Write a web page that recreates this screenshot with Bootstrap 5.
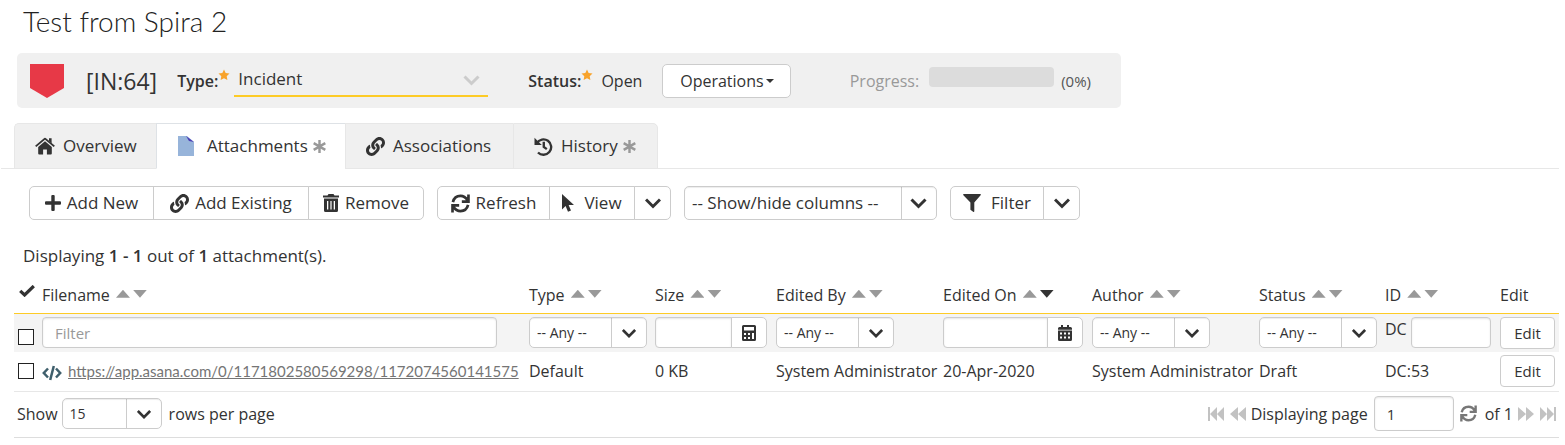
<!DOCTYPE html>
<html lang="en">
<head>
<meta charset="utf-8">
<meta name="viewport" content="width=device-width, initial-scale=1">
<title>Test from Spira 2 - Attachments</title>
<link href="https://cdn.jsdelivr.net/npm/bootstrap@5.3.0/dist/css/bootstrap.min.css" rel="stylesheet">
<style>
  body { font-family: "Open Sans", "Noto Sans", sans-serif; font-size: 16px; line-height: 24px; color: #333; background: #fff; }
  svg { fill: currentColor; flex: none; }
  .line-icon { fill: none; stroke: currentColor; }
  .page-title { font: 300 28px/32px Lato, sans-serif; margin: 5px 23px 16px; color: #222; }
  .art-bar { width: min(1104px, calc(100% - 34px)); height: 55px; margin-left: 17px; padding: 0 30px 0 13px; background: #f0f0f0; border-radius: 5px; white-space: nowrap; }
  .art-id { font-size: 23px; margin: 0 20px 0 22px; }
  .fld { font-weight: 600; }
  .star { width: 12px; height: 12px; color: #f8a32b; margin-top: -12px; }
  .type-select { width: 254px; height: 32px; margin: 0 40px 0 4px; padding: 0 24px 2px 4px; border: 0; border-bottom: 2px solid #fdcb26; border-radius: 0; color: #333; font-size: 17px; line-height: 24px;
    background: transparent url("data:image/svg+xml,%3Csvg xmlns='http://www.w3.org/2000/svg' viewBox='0 0 16 16'%3E%3Cpath fill='none' stroke='%23ccc' stroke-width='3' d='m1 4.500 7 7 7-7'/%3E%3C/svg%3E") no-repeat right 8px center / 17px 16px; }
  .btn-tool { --bs-btn-color: #333; --bs-btn-bg: #fff; --bs-btn-border-color: #ccc; --bs-btn-hover-color: #333; --bs-btn-hover-bg: #eee; --bs-btn-hover-border-color: #aaa;
    --bs-btn-font-size: 17px; --bs-btn-padding-x: 14px; --bs-btn-padding-y: 0; --bs-btn-border-radius: 5px; height: 34px; line-height: 24px; display: inline-flex; align-items: center; justify-content: center; gap: 6px; white-space: nowrap; }
  .btn-arrow { --bs-btn-padding-x: 9px; }
  .ops { --bs-btn-font-size: 16px; width: 129px; margin-left: 20px; gap: 0; }
  .ops::after { margin-left: 2px; }
  .art-note { font-size: 15px; color: #555; }
  .prog { width: 125px; height: 20px; border-radius: 4px; background: #dcdcdc; margin: 0 7px 8px 10px; }
  .soft { color: #999; }
  .tab-row { margin: 15px 6px 0 1px; padding-left: 13px; border-bottom: 1px solid #e7e7e7; flex-wrap: nowrap; }
  .tab-row .nav-link { height: 46px; padding: 0 20px; margin: 0 0 -1px; display: flex; align-items: center; color: #333; font-size: 17px; background: #f0f0f0; border: 1px solid #e7e7e7; border-right-width: 0; border-radius: 0; white-space: nowrap; }
  .tab-row li:first-child .nav-link { border-top-left-radius: 5px; }
  .tab-row li:last-child .nav-link { border-top-right-radius: 5px; border-right-width: 1px; }
  .tab-row .nav-link.active { background: #fff; border-bottom-color: #fff; color: #333; }
  .tab-ov { width: 142px; } .tab-at { width: 189px; } .tab-as { width: 168px; } .tab-hi { width: 145px; }
  .tools { margin: 17px 29px 0; gap: 13px; }
  .w-new { width: 125px; } .w-ex { width: 156px; } .w-rem { width: 116px; } .w-ref { width: 113px; } .w-view { width: 86px; } .w-arr { width: 37px; } .w-fil { width: 94px; }
  .cols-select, .mini-select { appearance: none; border: 1px solid #ccc; border-radius: 5px; color: #333; padding: 0 0 0 7px; background-color: #fff;
    background-image: url("data:image/svg+xml,%3Csvg xmlns='http://www.w3.org/2000/svg' viewBox='0 0 16 16'%3E%3Cpath fill='none' stroke='%23333' stroke-width='3' d='m1 4.500 7 7 7-7'/%3E%3C/svg%3E"), linear-gradient(#ccc, #ccc);
    background-repeat: no-repeat; background-position: right 10px center, right 34px top; background-size: 14px 14px, 1px 100%; box-shadow: inset 0 1px 1px #00000013; }
  .cols-select { width: 253px; height: 34px; font-size: 17px; background-size: 17px 16px, 1px 100%; background-position: right 9px center, right 34px top; }
  .mini-select { width: 118px; height: 31px; font-size: 14px; }
  .rows-select { width: 100px; margin: 0 7px 0 4px; }
  .count-line { margin: 24px 23px 9px; font-size: 17px; }
  .grid-wrap { margin: 0 6px 0 14px; }
  .grid-table { table-layout: fixed; width: 100%; min-width: 1400px; margin: 0; --bs-table-bg: transparent; --bs-table-color: #333; color: #333; }
  .grid-table > :not(caption) > * > * { padding: 0 0 0 5px; border-bottom: 0; vertical-align: middle; white-space: nowrap; }
  .grid-table thead th { font-weight: 400; height: 36px; }
  .c-chk { width: 23px; } .c-type { width: 126px; } .c-size { width: 121px; } .c-by { width: 167px; } .c-on { width: 149px; } .c-au { width: 167px; } .c-st { width: 126px; } .c-id { width: 115px; } .c-ed { width: 64px; }
  .grid-table .head-row > th { border-bottom: 1px solid #fdcb26; }
  .filter-row { background: #f4f4f4; height: 39px; }
  .data-row { height: 39px; }
  .grid-table .data-row > td { border-bottom: 1px solid #e7e7e7; }
  .foot-row { height: 46px; }
  .grid-table .foot-row > td { border-bottom: 1px solid #ddd; padding: 0 2px 1px 3px; }
  .sort { display: inline-flex; gap: 3px; vertical-align: 3px; margin-left: 2px; }
  .sort button { border: 0; padding: 0; width: 14px; height: 8px; background: #999; clip-path: polygon(0 0, 100% 0, 50% 100%); }
  .sort .up { clip-path: polygon(50% 0, 100% 100%, 0 100%); }
  .sort .on { background: #333; }
  .box { appearance: none; display: block; width: 16px; height: 16px; border: 1px solid #222; background: #fff; margin: 0 0 0 -1px; }
  .box:checked { background: #333; }
  .filter-row .box { margin-top: 9px; }
  .inp { height: 31px; padding: 0 12px; border: 1px solid #ccc; border-radius: 4px; font-size: 15px; color: #333; box-shadow: inset 0 1px 2px #0000001a; }
  .inp::placeholder { color: #999; }
  .name-inp { width: calc(100% - 27px); }
  .size-grp { width: 112px; } .date-grp { width: 140px; }
  .add-btn { --bs-btn-padding-x: 0; width: 36px; height: 31px; }
  .id-inp { width: 80px; margin-left: 4px; }
  .page-inp { width: 80px; height: 35px; margin: 0 6px; }
  .btn-edit { --bs-btn-font-size: 15px; --bs-btn-padding-x: 0; --bs-btn-border-radius: 4px; width: 55px; height: 32px; }
  .file-link { color: #757575; font: 15px/24px Lato, sans-serif; margin-left: 6px; }
  .pg { border: 0; padding: 0; background: none; color: #c2c2c2; display: inline-flex; }
</style>
</head>
<body>
<svg class="d-none" xmlns="http://www.w3.org/2000/svg">
  <symbol id="i-link" viewBox="0 0 512 512"><path d="M326.612 185.391c59.747 59.809 58.927 155.698.36 214.590-.11.12-.24.25-.36.37l-67.2 67.2c-59.270 59.270-155.699 59.262-214.960 0-59.270-59.260-59.270-155.700 0-214.960l37.106-37.106c9.840-9.840 26.786-3.300 27.294 10.606.648 17.722 3.826 35.527 9.690 52.721 1.986 5.822.567 12.262-3.783 16.612l-13.087 13.087c-28.026 28.026-28.905 73.660-1.155 101.960 28.024 28.579 74.086 28.749 102.325.51l67.2-67.190c28.191-28.191 28.073-73.757 0-101.830-3.701-3.694-7.429-6.564-10.341-8.569a16.037 16.037 0 0 1-6.947-12.606c-.396-10.567 3.348-21.456 11.698-29.806l21.054-21.055c5.521-5.521 14.182-6.199 20.584-1.731a152.482 152.482 0 0 1 20.522 17.197zM467.547 44.449c-59.261-59.262-155.690-59.270-214.960 0l-67.2 67.2c-.12.12-.25.25-.36.37-58.566 58.892-59.387 154.781.36 214.590a152.454 152.454 0 0 0 20.521 17.196c6.402 4.468 15.064 3.789 20.584-1.731l21.054-21.055c8.350-8.350 12.094-19.239 11.698-29.806a16.037 16.037 0 0 0-6.947-12.606c-2.912-2.005-6.640-4.875-10.341-8.569-28.073-28.073-28.191-73.639 0-101.830l67.2-67.190c28.239-28.239 74.300-28.069 102.325.51 27.750 28.300 26.872 73.934-1.155 101.960l-13.087 13.087c-4.350 4.350-5.769 10.790-3.783 16.612 5.864 17.194 9.042 34.999 9.690 52.721.509 13.906 17.454 20.446 27.294 10.606l37.106-37.106c59.271-59.259 59.271-155.699.001-214.959z"/></symbol>
  <symbol id="i-sync" viewBox="0 0 20 20"><path fill="none" stroke="currentColor" stroke-width="2.800" d="M2 8.500C3 4.500 6 2 10 2c3.200 0 5.500 1.600 7.300 4.600M18 11.500c-1 4-4 6.500-8 6.500-3.200 0-5.500-1.600-7.300-4.600M18.400.5v7.600h-7M1.600 19.500v-7.600h7"/></symbol>
  <symbol id="i-star" viewBox="0 0 24 24"><path d="m12 1 3.300 7.100 7.700 1-5.600 5.400 1.400 7.700-6.800-3.800-6.800 3.800 1.400-7.700L1 9.100l7.700-1z"/></symbol>
  <symbol id="i-aster" viewBox="0 0 16 16"><path fill="none" stroke="currentColor" stroke-width="2.600" d="M8 1v14M1.800 4.400l12.400 7.200M14.200 4.400 1.800 11.600"/></symbol>
  <symbol id="i-chev" viewBox="0 0 16 16"><path fill="none" stroke="currentColor" stroke-width="3" d="m1 4.500 7 7 7-7"/></symbol>
  <symbol id="i-back" viewBox="0 0 18 14"><path d="M9 0v14L1 7zM17 0v14L9 7z"/></symbol>
  <symbol id="i-first" viewBox="0 0 18 14"><path d="M1 0h2v14H1zM10 0v14L3 7zM17 0v14l-7-7z"/></symbol>
</svg>

<h1 class="page-title">Test from Spira 2</h1>

<section class="art-bar d-flex align-items-center">
  <svg width="34" height="34" viewBox="0 0 34 34"><path fill="#e73947" d="M0 0h34v24L17 34 0 24z"/></svg>
  <span class="art-id">[IN:64]</span>
  <label class="fld" for="type">Type:</label><svg class="star"><use href="#i-star"/></svg>
  <select id="type" class="form-select type-select"><option>Incident</option></select>
  <span class="fld">Status:</span><svg class="star"><use href="#i-star"/></svg>
  <span class="ms-2">Open</span>
  <button class="btn btn-tool dropdown-toggle ops" type="button">Operations</button>
  <span class="soft ms-auto">Progress:</span>
  <div class="prog" role="progressbar" aria-label="Progress" aria-valuenow="0" aria-valuemin="0" aria-valuemax="100"></div>
  <span class="art-note">(0%)</span>
</section>

<ul class="nav nav-tabs tab-row">
  <li class="tab-ov"><a class="nav-link" href="#overview"><svg width="20" height="18" viewBox="0 0 20 18" class="me-2"><path d="M10 4.200 3.200 10v6.500c0 .6.300.9.900.9h4v-5h3.800v5h4c.6 0 .9-.3.900-.9V10z"/><path class="line-icon" stroke-width="1.900" d="m.7 9.400 8.600-7.300q.7-.6 1.400 0l8.600 7.300"/><path d="M14 1.300h2.600v5L14 4z"/></svg>Overview</a></li>
  <li class="tab-at"><a class="nav-link active" href="#attachments"><svg width="18" height="20" viewBox="0 0 18 20" class="me-2"><path fill="#97b4da" d="M1 0h9l7 6v14H1z"/><path fill="#4b3fb5" d="m9 0 8 6-5-1z"/></svg><span class="mx-1">Attachments</span><svg width="15" height="15" class="soft"><use href="#i-aster"/></svg></a></li>
  <li class="tab-as"><a class="nav-link" href="#associations"><svg width="19" height="19" class="me-2"><use href="#i-link"/></svg>Associations</a></li>
  <li class="tab-hi"><a class="nav-link" href="#history"><svg width="19" height="19" viewBox="0 0 20 20" class="me-2"><path class="line-icon" stroke-width="2.500" d="M3 6.500a8.100 8.100 0 1 1 1.200 9.800M10.300 5v5.500l3.200 2.300"/><path d="M.5.800v7.700h7.700z"/></svg>History<svg width="15" height="15" class="soft ms-1"><use href="#i-aster"/></svg></a></li>
</ul>

<div class="tools d-flex">
  <div class="btn-group">
    <button class="btn btn-tool w-new" type="button"><svg width="16" height="16" viewBox="0 0 16 16"><path d="M6.300 1q0-1 1-1h1.400q1 0 1 1v5.300H15q1 0 1 1v1.400q0 1-1 1H9.700V15q0 1-1 1H7.300q-1 0-1-1V9.700H1q-1 0-1-1V7.300q0-1 1-1h5.300z"/></svg>Add New</button>
    <button class="btn btn-tool w-ex" type="button"><svg width="19" height="19"><use href="#i-link"/></svg>Add Existing</button>
    <button class="btn btn-tool w-rem" type="button"><svg width="16" height="18" viewBox="0 0 16 18"><path fill-rule="evenodd" d="M0 1.500h4.500L5.500 0h5l1 1.500H16v2H0zM1 4.500h14v12q0 1.500-1.500 1.500h-11Q1 18 1 16.500zM4 7v8.500h1.300V7zm3.400 0v8.500h1.200V7zm3.300 0v8.500H12V7z"/></svg>Remove</button>
  </div>
  <div class="btn-group">
    <button class="btn btn-tool w-ref" type="button"><svg width="19" height="19"><use href="#i-sync"/></svg>Refresh</button>
    <button class="btn btn-tool w-view" type="button"><svg width="12" height="18" viewBox="0 0 12 18" class="me-1"><path d="M0 0v15.500L3.600 12l2.400 5.700 3-1.200L6.600 11H12z"/></svg>View</button>
    <button class="btn btn-tool btn-arrow w-arr" type="button" aria-label="View options"><svg width="16" height="16"><use href="#i-chev"/></svg></button>
  </div>
  <select class="cols-select" aria-label="Columns"><option>-- Show/hide columns --</option></select>
  <div class="btn-group">
    <button class="btn btn-tool w-fil" type="button"><svg width="18" height="18" viewBox="0 0 18 18" class="me-1"><path d="M.8 0h16.400q1.300 0 .4 1.200L11.300 8.500V17q0 1.500-1.200.7l-2.700-2V8.500L.4 1.200Q-.5 0 .8 0z"/></svg>Filter</button>
    <button class="btn btn-tool btn-arrow w-arr" type="button" aria-label="Filter options"><svg width="16" height="16"><use href="#i-chev"/></svg></button>
  </div>
</div>

<p class="count-line">Displaying <b class="fld">1 - 1</b> out of <b class="fld">1</b> attachment(s).</p>

<div class="grid-wrap">
<table class="table grid-table">
  <colgroup><col class="c-chk"><col><col class="c-type"><col class="c-size"><col class="c-by"><col class="c-on"><col class="c-au"><col class="c-st"><col class="c-id"><col class="c-ed"></colgroup>
  <thead><tr class="head-row">
    <th><svg width="16" height="12" viewBox="0 0 16 12" class="d-block mb-2" role="img" aria-label="Select"><path class="line-icon" stroke-width="3.200" d="m1.200 5.800 4.400 4.200L14.800 1"/></svg></th>
    <th>Filename <span class="sort"><button class="up" aria-label="Sort up"></button><button aria-label="Sort down"></button></span></th>
    <th>Type <span class="sort"><button class="up" aria-label="Sort up"></button><button aria-label="Sort down"></button></span></th>
    <th>Size <span class="sort"><button class="up" aria-label="Sort up"></button><button aria-label="Sort down"></button></span></th>
    <th>Edited By <span class="sort"><button class="up" aria-label="Sort up"></button><button aria-label="Sort down"></button></span></th>
    <th>Edited On <span class="sort"><button class="up" aria-label="Sort up"></button><button class="on" aria-label="Sort down"></button></span></th>
    <th>Author <span class="sort"><button class="up" aria-label="Sort up"></button><button aria-label="Sort down"></button></span></th>
    <th>Status <span class="sort"><button class="up" aria-label="Sort up"></button><button aria-label="Sort down"></button></span></th>
    <th>ID <span class="sort"><button class="up" aria-label="Sort up"></button><button aria-label="Sort down"></button></span></th>
    <th>Edit</th>
  </tr></thead>
  <tbody>
  <tr class="filter-row">
    <td><input class="box" type="checkbox" aria-label="Select all"></td>
    <td><input class="inp name-inp" type="text" placeholder="Filter" aria-label="Filename filter"></td>
    <td><select class="mini-select" aria-label="Type filter"><option>-- Any --</option></select></td>
    <td><div class="input-group flex-nowrap size-grp"><input class="form-control inp" type="text" aria-label="Size filter"><button class="btn btn-tool add-btn" type="button" aria-label="Size range"><svg width="14" height="16" viewBox="0 0 14 16"><path fill-rule="evenodd" d="M1.500 0h11Q14 0 14 1.500v13q0 1.500-1.500 1.500h-11Q0 16 0 14.500v-13Q0 0 1.500 0zM2 2v3.500h10V2zm0 6v2h2V8zm4 0v2h2V8zm4 0v6h2V8zm-8 4v2h2v-2zm4 0v2h2v-2z"/></svg></button></div></td>
    <td><select class="mini-select" aria-label="Edited by filter"><option>-- Any --</option></select></td>
    <td><div class="input-group flex-nowrap date-grp"><input class="form-control inp" type="text" aria-label="Edited on filter"><button class="btn btn-tool add-btn" type="button" aria-label="Pick date"><svg width="14" height="16" viewBox="0 0 14 16"><path fill-rule="evenodd" d="M3 0h2v2h4V0h2v2h1.500Q14 2 14 3.500V4.700H0V3.500Q0 2 1.500 2H3zM0 5.500h14v9q0 1.500-1.500 1.500h-11Q0 16 0 14.500zM2 7.500v2h2v-2zm4 0v2h2v-2zm4 0v2h2v-2zm-8 4v2h2v-2zm4 0v2h2v-2zm4 0v2h2v-2z"/></svg></button></div></td>
    <td><select class="mini-select" aria-label="Author filter"><option>-- Any --</option></select></td>
    <td><select class="mini-select" aria-label="Status filter"><option>-- Any --</option></select></td>
    <td><div class="d-flex"><label for="idf">DC</label><input id="idf" class="inp id-inp" type="text"></div></td>
    <td><button class="btn btn-tool btn-edit" type="button">Edit</button></td>
  </tr>
  <tr class="data-row">
    <td><input class="box" type="checkbox" aria-label="Select row"></td>
    <td><svg width="20" height="16" viewBox="0 0 20 16"><path fill="none" stroke="#3f5f6c" stroke-width="2.500" d="M6 3.500 1.800 8 6 12.500M14 3.500 18.200 8 14 12.500M11.800 1 8.200 15"/></svg><a class="file-link" href="#file">https://app.asana.com/0/1171802580569298/1172074560141575</a></td>
    <td>Default</td><td>0 KB</td><td>System Administrator</td><td>20-Apr-2020</td><td>System Administrator</td><td>Draft</td><td>DC:53</td>
    <td><button class="btn btn-tool btn-edit" type="button">Edit</button></td>
  </tr>
  </tbody>
  <tfoot><tr class="foot-row"><td colspan="10">
    <div class="d-flex align-items-center">
      <label for="rows">Show</label>
      <select id="rows" class="mini-select rows-select"><option>15</option></select>
      <span>rows per page</span>
      <div class="d-flex align-items-center ms-auto">
        <button class="pg me-1" type="button" aria-label="First page"><svg width="18" height="14"><use href="#i-first"/></svg></button>
        <button class="pg me-1" type="button" aria-label="Previous page"><svg width="18" height="14"><use href="#i-back"/></svg></button>
        <label for="pageno">Displaying page</label>
        <input id="pageno" class="inp page-inp" type="text" value="1">
        <button class="pg me-2" type="button" aria-label="Reload"><svg width="17" height="17" color="#777"><use href="#i-sync"/></svg></button>
        <span>of 1</span>
        <button class="pg mx-1" type="button" aria-label="Next page"><svg width="18" height="14" viewBox="0 0 18 14"><path d="M1 0v14l8-7zM9 0v14l8-7z"/></svg></button>
        <button class="pg" type="button" aria-label="Last page"><svg width="18" height="14" viewBox="0 0 18 14"><path d="M15 0h2v14h-2zM8 0v14l7-7zM1 0v14l7-7z"/></svg></button>
      </div>
    </div>
  </td></tr></tfoot>
</table>
</div>
<script src="https://cdn.jsdelivr.net/npm/bootstrap@5.3.0/dist/js/bootstrap.bundle.min.js"></script>
</body>
</html>
